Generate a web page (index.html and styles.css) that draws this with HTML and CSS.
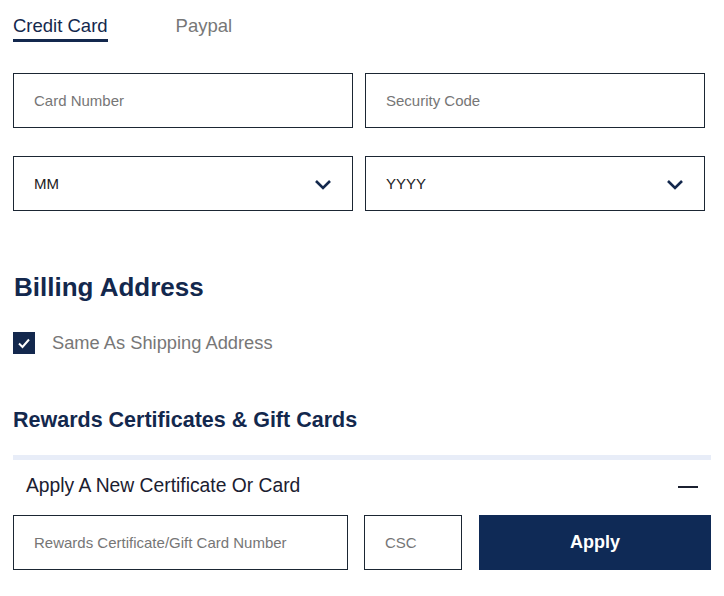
FILE: index.html
```html
<!DOCTYPE html>
<html lang="en">
<head>
    <meta charset="UTF-8">
    <meta name="viewport" content="width=device-width, initial-scale=1.0">
    <title>Payment</title>
    <link rel="stylesheet" href="styles.css">
</head>
<body>
<div class="page">
    <div class="tabs">
        <div class="tab active">Credit Card</div>
        <div class="tab">Paypal</div>
    </div>

    <div class="card-grid">
        <div class="field">Card Number</div>
        <div class="field">Security Code</div>
        <div class="field select">
            <span>MM</span>
            <svg class="chevron" width="18" height="12" viewBox="0 0 18 12"><path d="M2 2 L9 9 L16 2" fill="none" stroke="#13284d" stroke-width="2.6"/></svg>
        </div>
        <div class="field select">
            <span>YYYY</span>
            <svg class="chevron" width="18" height="12" viewBox="0 0 18 12"><path d="M2 2 L9 9 L16 2" fill="none" stroke="#13284d" stroke-width="2.6"/></svg>
        </div>
    </div>

    <h2 class="billing-title">Billing Address</h2>
    <div class="check-row">
        <div class="checkbox">
            <svg width="22" height="22" viewBox="0 0 22 22"><path d="M6 11.5 L9.5 15 L16 7.5" fill="none" stroke="#fff" stroke-width="2"/></svg>
        </div>
        <span class="check-label">Same As Shipping Address</span>
    </div>

    <h3 class="rewards-title">Rewards Certificates &amp; Gift Cards</h3>
    <div class="divider"></div>
    <div class="accordion-head">
        <span>Apply A New Certificate Or Card</span>
        <span class="minus"></span>
    </div>
    <div class="gift-row">
        <div class="field">Rewards Certificate/Gift Card Number</div>
        <div class="field csc">CSC</div>
        <button class="apply-btn">Apply</button>
    </div>
</div>
</body>
</html>
```

FILE: styles.css
```css
body {
    margin: 0;
    padding: 0;
    background: #fff;
    font-family: "Liberation Sans", Arial, sans-serif;
    color: #13284d;
}

.page {
    padding: 0 13px;
}

.tabs {
    display: flex;
    gap: 68px;
    padding-top: 15px;
}

.tab {
    font-size: 18.5px;
    color: #777;
    padding-bottom: 2px;
    border-bottom: 3px solid transparent;
}

.tab.active {
    color: #13284d;
    border-bottom-color: #13284d;
}

.card-grid {
    display: grid;
    grid-template-columns: 1fr 1fr;
    column-gap: 12px;
    row-gap: 28px;
    margin-top: 31px;
    margin-right: 6px;
}

.field {
    box-sizing: border-box;
    height: 55px;
    border: 1px solid #1b2633;
    display: flex;
    align-items: center;
    padding-left: 20px;
    font-size: 15px;
    color: #767676;
}

.field.select {
    justify-content: space-between;
    padding-right: 20px;
    color: #222;
}

.chevron {
    margin-top: 2px;
}

.billing-title {
    margin: 61px 0 0 1px;
    font-size: 26px;
    font-weight: 600;
    line-height: 30px;
}

.check-row {
    display: flex;
    align-items: center;
    gap: 17px;
    margin-top: 30px;
}

.checkbox {
    width: 22px;
    height: 22px;
    background: #13284d;
}

.check-label {
    font-size: 18.3px;
    color: #777;
}

.rewards-title {
    margin: 53px 0 0;
    font-size: 21.5px;
    font-weight: 600;
    line-height: 26px;
}

.divider {
    height: 5px;
    background: #e8edf8;
    margin-top: 22px;
}

.accordion-head {
    display: flex;
    justify-content: space-between;
    align-items: center;
    padding: 14px 13px 0 13px;
    height: 24px;
    font-size: 19.3px;
    font-weight: 500;
    color: #1b2030;
}

.minus {
    width: 20px;
    height: 2px;
    background: #1b2030;
    margin-top: 2px;
}

.gift-row {
    display: grid;
    grid-template-columns: 335px 98px 1fr;
    column-gap: 16px;
    margin-top: 17px;
}

.apply-btn {
    height: 55px;
    margin-left: 1px;
    border: none;
    background: #0f2a56;
    color: #fff;
    font-family: "Liberation Sans", Arial, sans-serif;
    font-size: 18px;
    font-weight: bold;
}
```
